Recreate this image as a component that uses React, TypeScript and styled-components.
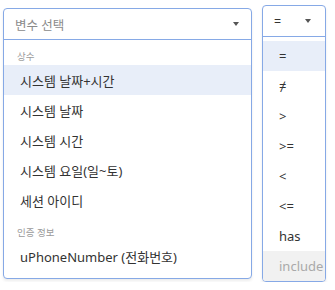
import * as React from 'react';
import styled, { createGlobalStyle } from 'styled-components';

const Global = createGlobalStyle`
    body {
        margin: 0;
        background: #ffffff;
        font-family: 'Noto Sans', 'Noto Sans CJK KR', sans-serif;
        color: #333333;
    }
`;

const Page = styled.div`
    display: flex;
    align-items: flex-start;
    gap: 10px;
    padding: 5px 0 0 3px;
`;

interface IBox {
    width: number;
    top: number;
}

const Box = styled.div`
    width: ${(props: IBox) => props.width}px;
    margin-top: ${(props: IBox) => props.top}px;
    border: 1px solid #86a9e6;
    border-radius: 4px;
    background: #ffffff;
    overflow: hidden;
    box-shadow: 0 2px 3px rgba(0, 0, 0, 0.08);
    box-sizing: border-box;
`;

interface IHead {
    height: number;
    left: number;
    right: number;
}

const Head = styled.div`
    display: flex;
    align-items: center;
    justify-content: space-between;
    height: ${(props: IHead) => props.height}px;
    padding: 0 ${(props: IHead) => props.right}px 0 ${(props: IHead) => props.left}px;
    border-bottom: 1px solid #86a9e6;
    font-size: 12.5px;
`;

const Placeholder = styled.span`
    color: #8a8a8a;
`;

const Value = styled.span`
    color: #333333;
`;

const Caret = styled.span`
    width: 0;
    height: 0;
    border-left: 3.5px solid transparent;
    border-right: 3.5px solid transparent;
    border-top: 4px solid #555555;
`;

const List = styled.ul`
    list-style: none;
    margin: 0;
    padding: ${(props: { pad: string }) => props.pad};
`;

const Group = styled.li`
    height: 18px;
    display: flex;
    align-items: center;
    padding: 0 13px;
    font-size: 9.5px;
    color: #9a9a9a;
`;

interface IItem {
    active?: boolean;
    disabled?: boolean;
    indent: number;
}

const Item = styled.li`
    height: 30px;
    display: flex;
    align-items: center;
    padding-left: ${(props: IItem) => props.indent}px;
    font-size: 13px;
    white-space: nowrap;
    color: ${(props: IItem) => (props.disabled ? '#a9a9a9' : '#333333')};
    background: ${(props: IItem) =>
        props.active ? '#e8eef9' : props.disabled ? '#f1f1f1' : 'transparent'};
`;

const Spacer = styled.li`
    height: ${(props: { size: number }) => props.size}px;
`;

const ops = ['=', '≠', '>', '>=', '<', '<=', 'has', 'include'];

const App = () => {
    return (
        <>
            <Global />
            <Page>
                <Box width={249} top={3}>
                    <Head height={30} left={11} right={12}>
                        <Placeholder>변수 선택</Placeholder>
                        <Caret />
                    </Head>
                    <List pad="7px 0 7px">
                        <Group>상수</Group>
                        <Item indent={16} active>시스템 날짜+시간</Item>
                        <Item indent={16}>시스템 날짜</Item>
                        <Item indent={16}>시스템 시간</Item>
                        <Item indent={16}>시스템 요일(일~토)</Item>
                        <Item indent={16}>세션 아이디</Item>
                        <Spacer size={8} />
                        <Group>인증 정보</Group>
                        <Item indent={16}>uPhoneNumber (전화번호)</Item>
                    </List>
                </Box>
                <Box width={64} top={0}>
                    <Head height={30} left={11} right={14}>
                        <Value>=</Value>
                        <Caret />
                    </Head>
                    <List pad="4px 0 0">
                        {ops.map((op, i) => (
                            <Item key={op} indent={16} active={i === 0} disabled={op === 'include'}>
                                {op}
                            </Item>
                        ))}
                    </List>
                </Box>
            </Page>
        </>
    );
};

export default App;
